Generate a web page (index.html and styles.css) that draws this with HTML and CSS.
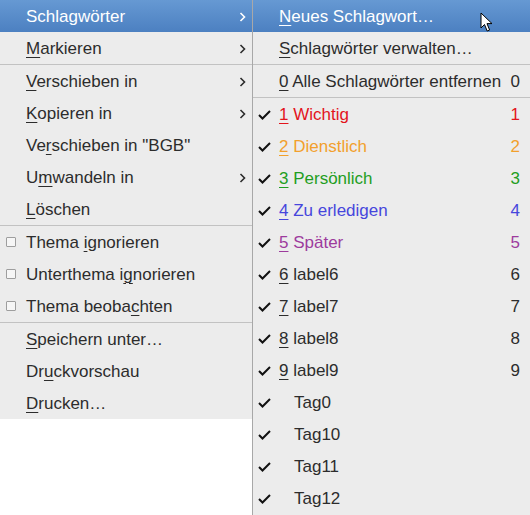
FILE: index.html
```html
<!DOCTYPE html>
<html lang="de">
<head>
<meta charset="utf-8">
<title>Menü</title>
<link rel="stylesheet" href="styles.css">
</head>
<body>
<div class="screen">
  <div class="menu main">
    <div class="item active"><span class="slot"></span><span class="label">Schlagwörter</span><span class="arrow"><svg width="7" height="10" viewBox="0 0 7 10"><polyline points="1.5,1 5.5,5 1.5,9" fill="none" stroke="currentColor" stroke-width="1.6"/></svg></span></div>
    <div class="item"><span class="slot"></span><span class="label"><u>M</u>arkieren</span><span class="arrow"><svg width="7" height="10" viewBox="0 0 7 10"><polyline points="1.5,1 5.5,5 1.5,9" fill="none" stroke="currentColor" stroke-width="1.6"/></svg></span></div>
    <div class="sep"></div>
    <div class="item"><span class="slot"></span><span class="label"><u>V</u>erschieben in</span><span class="arrow"><svg width="7" height="10" viewBox="0 0 7 10"><polyline points="1.5,1 5.5,5 1.5,9" fill="none" stroke="currentColor" stroke-width="1.6"/></svg></span></div>
    <div class="item"><span class="slot"></span><span class="label"><u>K</u>opieren in</span><span class="arrow"><svg width="7" height="10" viewBox="0 0 7 10"><polyline points="1.5,1 5.5,5 1.5,9" fill="none" stroke="currentColor" stroke-width="1.6"/></svg></span></div>
    <div class="item"><span class="slot"></span><span class="label">Ve<u>r</u>schieben in "BGB"</span></div>
    <div class="item"><span class="slot"></span><span class="label">U<u>m</u>wandeln in</span><span class="arrow"><svg width="7" height="10" viewBox="0 0 7 10"><polyline points="1.5,1 5.5,5 1.5,9" fill="none" stroke="currentColor" stroke-width="1.6"/></svg></span></div>
    <div class="item"><span class="slot"></span><span class="label"><u>L</u>öschen</span></div>
    <div class="sep"></div>
    <div class="item"><span class="slot"><span class="box"></span></span><span class="label">Thema <u>i</u>gnorieren</span></div>
    <div class="item"><span class="slot"><span class="box"></span></span><span class="label">Unterthema i<u>g</u>norieren</span></div>
    <div class="item"><span class="slot"><span class="box"></span></span><span class="label">Thema beoba<u>c</u>hten</span></div>
    <div class="sep"></div>
    <div class="item"><span class="slot"></span><span class="label"><u>S</u>peichern unter…</span></div>
    <div class="item"><span class="slot"></span><span class="label">Dr<u>u</u>ckvorschau</span></div>
    <div class="item"><span class="slot"></span><span class="label"><u>D</u>rucken…</span></div>
  </div>
  <div class="menu sub">
    <div class="item active"><span class="slot"></span><span class="label"><u>N</u>eues Schlagwort…</span></div>
    <div class="item"><span class="slot"></span><span class="label"><u>S</u>chlagwörter verwalten…</span></div>
    <div class="sep"></div>
    <div class="item"><span class="slot"></span><span class="label"><u>0</u> Alle Schlagwörter entfernen</span><span class="num">0</span></div>
    <div class="sep"></div>
    <div class="item c-red"><span class="slot"><svg class="check" width="13" height="10" viewBox="0 0 13 10"><polyline points="1,5 4.5,8.5 12,1" fill="none" stroke="#111" stroke-width="2"/></svg></span><span class="label"><u>1</u> Wichtig</span><span class="num">1</span></div>
    <div class="item c-orange"><span class="slot"><svg class="check" width="13" height="10" viewBox="0 0 13 10"><polyline points="1,5 4.5,8.5 12,1" fill="none" stroke="#111" stroke-width="2"/></svg></span><span class="label"><u>2</u> Dienstlich</span><span class="num">2</span></div>
    <div class="item c-green"><span class="slot"><svg class="check" width="13" height="10" viewBox="0 0 13 10"><polyline points="1,5 4.5,8.5 12,1" fill="none" stroke="#111" stroke-width="2"/></svg></span><span class="label"><u>3</u> Persönlich</span><span class="num">3</span></div>
    <div class="item c-blue"><span class="slot"><svg class="check" width="13" height="10" viewBox="0 0 13 10"><polyline points="1,5 4.5,8.5 12,1" fill="none" stroke="#111" stroke-width="2"/></svg></span><span class="label"><u>4</u> Zu erledigen</span><span class="num">4</span></div>
    <div class="item c-purple"><span class="slot"><svg class="check" width="13" height="10" viewBox="0 0 13 10"><polyline points="1,5 4.5,8.5 12,1" fill="none" stroke="#111" stroke-width="2"/></svg></span><span class="label"><u>5</u> Später</span><span class="num">5</span></div>
    <div class="item"><span class="slot"><svg class="check" width="13" height="10" viewBox="0 0 13 10"><polyline points="1,5 4.5,8.5 12,1" fill="none" stroke="#111" stroke-width="2"/></svg></span><span class="label"><u>6</u> label6</span><span class="num">6</span></div>
    <div class="item"><span class="slot"><svg class="check" width="13" height="10" viewBox="0 0 13 10"><polyline points="1,5 4.5,8.5 12,1" fill="none" stroke="#111" stroke-width="2"/></svg></span><span class="label"><u>7</u> label7</span><span class="num">7</span></div>
    <div class="item"><span class="slot"><svg class="check" width="13" height="10" viewBox="0 0 13 10"><polyline points="1,5 4.5,8.5 12,1" fill="none" stroke="#111" stroke-width="2"/></svg></span><span class="label"><u>8</u> label8</span><span class="num">8</span></div>
    <div class="item"><span class="slot"><svg class="check" width="13" height="10" viewBox="0 0 13 10"><polyline points="1,5 4.5,8.5 12,1" fill="none" stroke="#111" stroke-width="2"/></svg></span><span class="label"><u>9</u> label9</span><span class="num">9</span></div>
    <div class="item"><span class="slot"><svg class="check" width="13" height="10" viewBox="0 0 13 10"><polyline points="1,5 4.5,8.5 12,1" fill="none" stroke="#111" stroke-width="2"/></svg></span><span class="label tag">Tag0</span></div>
    <div class="item"><span class="slot"><svg class="check" width="13" height="10" viewBox="0 0 13 10"><polyline points="1,5 4.5,8.5 12,1" fill="none" stroke="#111" stroke-width="2"/></svg></span><span class="label tag">Tag10</span></div>
    <div class="item"><span class="slot"><svg class="check" width="13" height="10" viewBox="0 0 13 10"><polyline points="1,5 4.5,8.5 12,1" fill="none" stroke="#111" stroke-width="2"/></svg></span><span class="label tag">Tag11</span></div>
    <div class="item"><span class="slot"><svg class="check" width="13" height="10" viewBox="0 0 13 10"><polyline points="1,5 4.5,8.5 12,1" fill="none" stroke="#111" stroke-width="2"/></svg></span><span class="label tag">Tag12</span></div>
  </div>
  <svg class="cursor" width="14" height="21" viewBox="0 0 14 21"><path d="M1,1 L1,16 L4.5,12.5 L7.2,19 L9.6,18 L7,11.6 L12,11.6 Z" fill="#fff" stroke="#000" stroke-width="1" stroke-linejoin="miter"/></svg>
</div>
</body>
</html>
```
FILE: styles.css
```css
html, body {
  margin: 0;
  padding: 0;
  background: #ffffff;
}
.screen {
  position: relative;
  display: flex;
  align-items: flex-start;
  width: 530px;
  height: 515px;
  overflow: hidden;
  font-family: "Liberation Sans", Arial, sans-serif;
  font-size: 17px;
  color: #2c2c2c;
}
.menu {
  background: #ececec;
  display: flex;
  flex-direction: column;
}
.main {
  width: 252px;
}
.sub {
  width: 277px;
  height: 515px;
  border-left: 1px solid #a8a8a8;
}
.item {
  height: 32px;
  display: flex;
  align-items: center;
  white-space: nowrap;
}
.main .item {
  padding-right: 6px;
}
.sub .item {
  padding-right: 10px;
}
.slot {
  flex: 0 0 26px;
  height: 32px;
  display: flex;
  align-items: center;
}
.label {
  flex: 1 1 auto;
  padding-top: 2px;
}
.num {
  flex: 0 0 auto;
  padding-top: 2px;
}
.label.tag {
  padding-left: 15px;
}
u {
  text-decoration: underline;
  text-underline-offset: 3px;
  text-decoration-thickness: 1px;
}
.arrow {
  display: flex;
  align-items: center;
  padding-top: 1px;
  color: #2c2c2c;
}
.active {
  background: linear-gradient(#6699d3, #4c80c1);
  color: #ffffff;
}
.active .arrow {
  color: #ffffff;
}
.sep {
  height: 1px;
  background: #c2c2c2;
}
.box {
  width: 8px;
  height: 8px;
  margin-left: 6px;
  margin-top: -1px;
  border: 1px solid #9e9e9e;
  background: #f6f6f6;
  border-radius: 1px;
}
.check {
  margin-left: 5px;
  margin-top: 1px;
}
.c-red { color: #e3141c; }
.c-orange { color: #f2a02c; }
.c-green { color: #1f9e22; }
.c-blue { color: #4646dc; }
.c-purple { color: #9d3b9d; }
.cursor {
  position: absolute;
  left: 480px;
  top: 12px;
}
```
